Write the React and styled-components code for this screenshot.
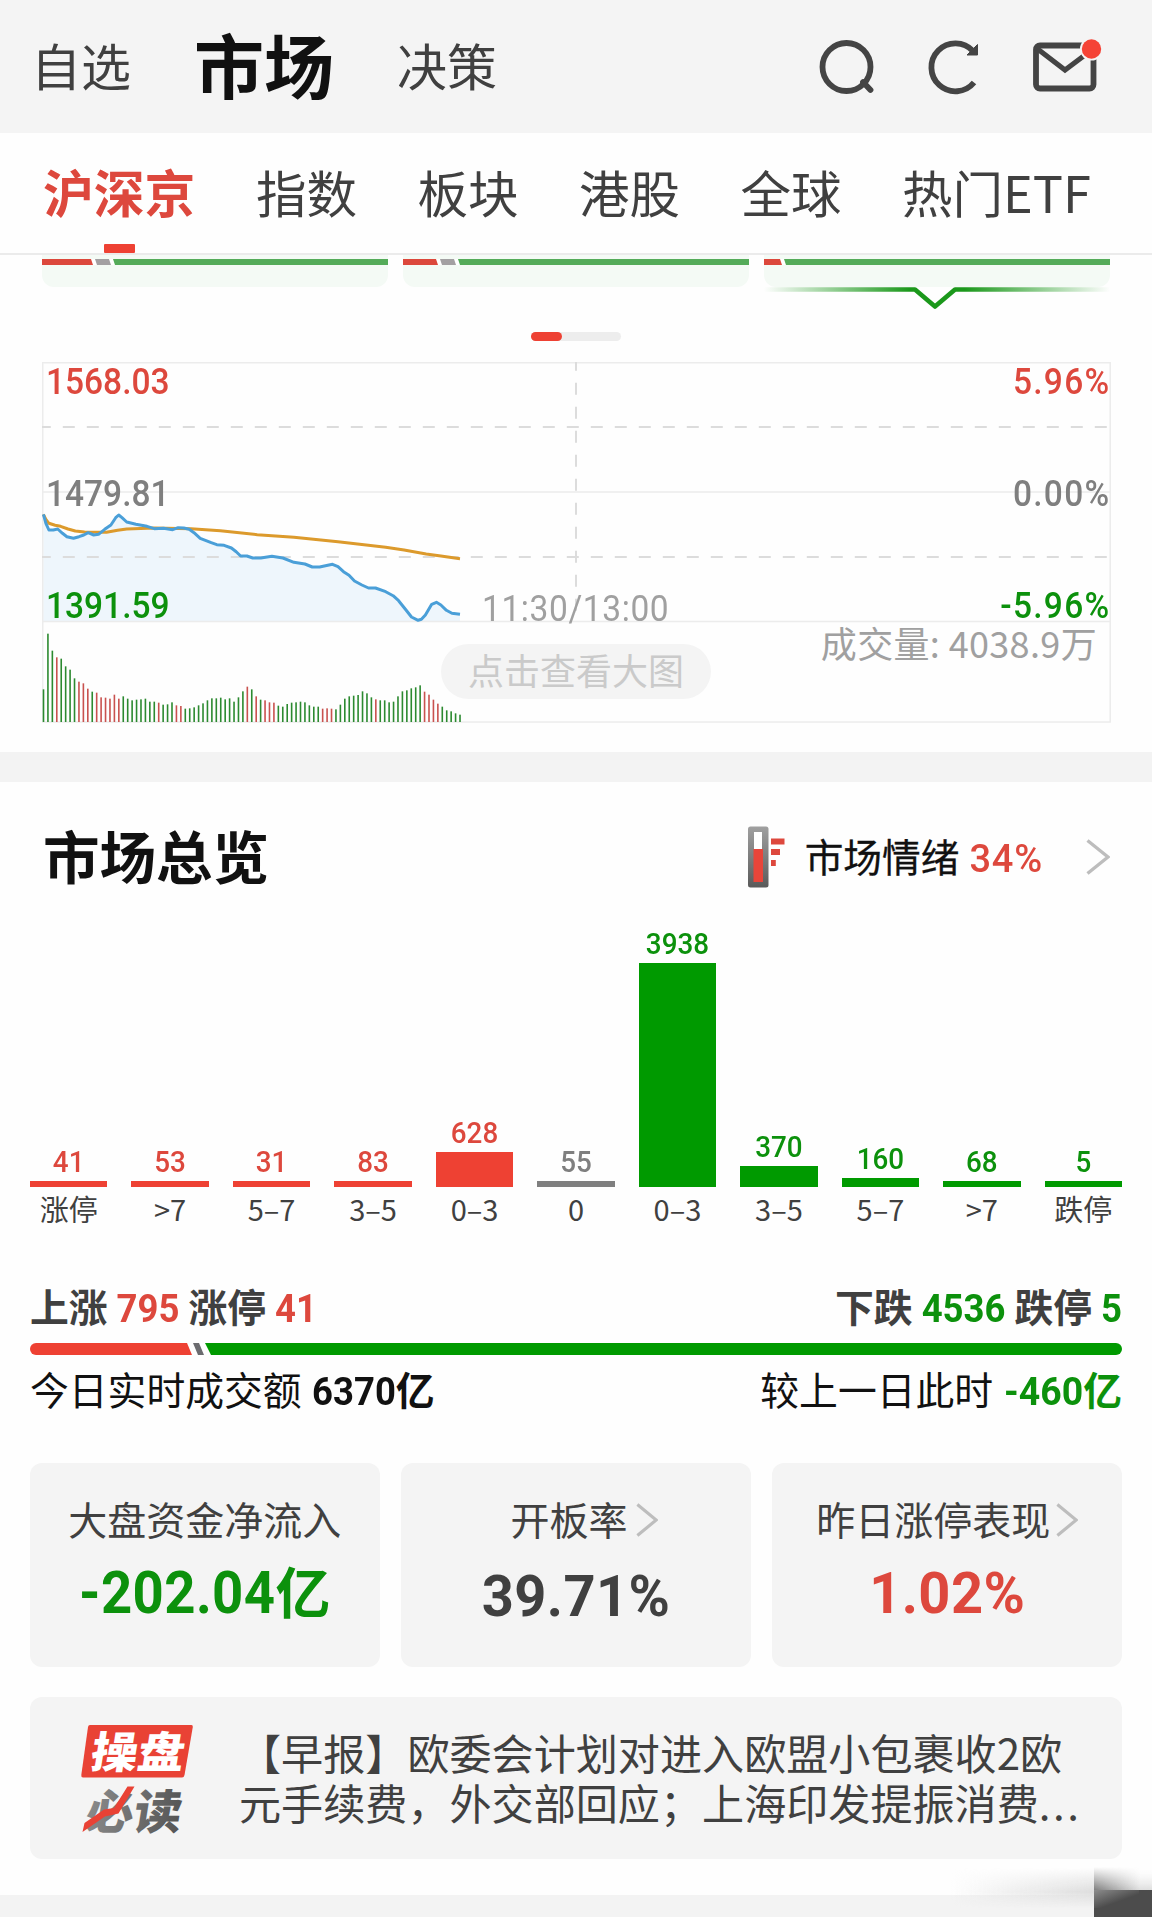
import React from "react";
import styled, { createGlobalStyle, css } from "styled-components";

const colors = {
  red: "#ee4133",
  redText: "#dd483d",
  green: "#009a00",
  greenText: "#0c910c",
  gray: "#7f7f7f",
  dark: "#111111",
  text: "#404040",
  panel: "#f4f4f4",
};

const GlobalStyle = createGlobalStyle`
  * {
    box-sizing: border-box;
  }
  body {
    margin: 0;
    background: #fefefe;
    font-family: "Noto Sans CJK SC", "Noto Sans", sans-serif;
    color: ${colors.text};
    -webkit-font-smoothing: antialiased;
  }
`;

const toneColor = {
  up: colors.redText,
  down: colors.greenText,
  flat: colors.gray,
  muted: "#a0a0a0",
  text: colors.text,
  dark: colors.dark,
};

const barColor = { up: colors.red, down: colors.green, flat: colors.gray };

/* digits are set a little taller than Roboto draws them, from the baseline */
const numeric = css`
  display: inline-block;
  font-family: Roboto, "Liberation Sans", sans-serif;
  line-height: 1;
  transform: scaleY(${(props) => props.$stretch || 1.07});
  transform-origin: 50% 84%;
`;

const Num = styled.span`
  ${numeric}
  font-size: ${(props) => props.$size}px;
  font-weight: ${(props) => props.$weight || 700};
  color: ${(props) => toneColor[props.$tone]};
`;

const Page = styled.div`
  position: relative;
  width: 1152px;
  height: 1917px;
  overflow: hidden;
  display: flex;
  flex-direction: column;
  background: #fefefe;
`;

/* ---------- header ---------- */

const Header = styled.header`
  height: 133px;
  flex: none;
  display: flex;
  align-items: center;
  padding: 0 49px 0 31px;
  background: ${colors.panel};
`;

const HeaderNav = styled.nav`
  display: flex;
  align-items: center;
  flex: 1;
`;

const HeaderItem = styled.a`
  font-size: ${(props) => (props.$active ? 70 : 50)}px;
  font-weight: ${(props) => (props.$active ? 700 : 400)};
  color: ${(props) => (props.$active ? colors.dark : colors.text)};
  line-height: 1;
  margin-right: 63px;
  padding-bottom: ${(props) => (props.$active ? 5 : 6)}px;
`;

const HeaderIcons = styled.div`
  display: flex;
  align-items: center;
  gap: 51px;
`;

/* ---------- tabs ---------- */

const Tabs = styled.nav`
  height: 122px;
  flex: none;
  display: flex;
  gap: 60.5px;
  padding-left: 43px;
  border-bottom: 2px solid #ebebeb;
`;

const Tab = styled.a`
  display: flex;
  flex-direction: column;
  align-items: center;
  justify-content: space-between;
  padding-top: 33px;
  font-size: ${(props) => (props.$active ? 50.8 : 50.5)}px;
  line-height: 1;
  font-weight: ${(props) => (props.$active ? 700 : 400)};
  color: ${(props) => (props.$active ? colors.redText : colors.text)};
  white-space: nowrap;
`;

const TabMark = styled.span`
  width: 31px;
  height: 9px;
  border-radius: 1px;
  background: ${colors.red};
`;

/* ---------- index strip ---------- */

const IndexStrip = styled.div`
  display: grid;
  grid-template-columns: repeat(3, 346px);
  gap: 15px;
  padding-left: 42px;
  height: 77px;
  flex: none;
`;

const IndexCard = styled.div`
  position: relative;
  height: 32px;
  padding-top: 4px;
  background: #f4faf5;
  border-radius: 0 0 12px 12px;
`;

const MiniRatio = styled.div`
  display: flex;
  height: 6px;
  background: #fff;
`;

const MiniPart = styled.span`
  height: 6px;
  margin-right: 2px;
  width: ${(props) => (props.$width ? `${props.$width}px` : "auto")};
  flex: ${(props) => (props.$width ? "none" : 1)};
  background: ${(props) => props.$color};
  clip-path: ${(props) =>
    props.$first
      ? "polygon(0 0, calc(100% - 2px) 0, 100% 100%, 0 100%)"
      : props.$last
        ? "polygon(0 0, 100% 0, 100% 100%, 2px 100%)"
        : "polygon(0 0, calc(100% - 2px) 0, 100% 100%, 2px 100%)"};
  &:last-child {
    margin-right: 0;
  }
`;

const SelectedMark = styled.svg`
  position: absolute;
  left: 0;
  top: 30px;
  width: 346px;
  height: 28px;
`;

const Pager = styled.div`
  width: 90px;
  height: 9px;
  margin: 0 auto;
  flex: none;
  border-radius: 5px;
  background: #ededed;
  &::before {
    content: "";
    display: block;
    width: 31px;
    height: 9px;
    border-radius: 5px;
    background: ${colors.red};
  }
`;

/* ---------- intraday chart ---------- */

const ChartBox = styled.div`
  position: relative;
  width: 1069px;
  height: 361px;
  margin: 21px 0 29px 42px;
  flex: none;
  svg {
    display: block;
  }
`;

const AxisLabel = styled.span`
  ${numeric}
  position: absolute;
  top: ${(props) => props.$top}px;
  ${(props) =>
    props.$right ? "right: 0.5px; letter-spacing: 1.3px;" : "left: 4px;"}
  font-size: 33.5px;
  font-weight: 500;
  color: ${(props) => toneColor[props.$tone]};
`;

const NoonLabel = styled(AxisLabel)`
  left: 440px;
  font-weight: 400;
  letter-spacing: 0.6px;
`;

const VolumeLabel = styled.span`
  position: absolute;
  top: 262px;
  right: 14px;
  font-size: 36px;
  line-height: 1;
  letter-spacing: 0.35px;
  color: #a0a0a0;
  white-space: pre;
`;

const ZoomButton = styled.button`
  position: absolute;
  left: 399px;
  top: 282px;
  width: 270px;
  height: 55px;
  padding: 0 0 6px;
  border: 0;
  border-radius: 28px;
  background: ${colors.panel};
  color: #cacaca;
  font-family: inherit;
  font-size: 36px;
  line-height: 1;
`;

const Divider = styled.div`
  height: 30px;
  flex: none;
  background: #f3f3f3;
`;

/* ---------- overview ---------- */

const Overview = styled.section`
  flex: 1;
  padding: 0 30px;
  display: flex;
  flex-direction: column;
`;

const OverviewHead = styled.div`
  display: flex;
  align-items: center;
  height: 62px;
  margin-top: 44px;
  padding: 0 12px 0 13px;
`;

const Title = styled.h2`
  flex: 1;
  margin: 0;
  padding-bottom: 6px;
  font-size: 56.5px;
  line-height: 1;
  font-weight: 700;
  color: ${colors.dark};
`;

const Mood = styled.div`
  display: flex;
  align-items: center;
`;

const MoodText = styled.span`
  margin-left: 20px;
  font-size: 38.7px;
  line-height: 1;
  font-weight: 400;
  -webkit-text-stroke: 0.3px currentColor;
  color: ${colors.dark};
  white-space: nowrap;
  ${Num} {
    margin-left: 10px;
    margin-right: 43px;
    letter-spacing: 0.8px;
    -webkit-text-stroke: 0;
  }
`;

const Distribution = styled.div`
  display: grid;
  grid-template-columns: repeat(11, 1fr);
  column-gap: 24.2px;
  height: 339px;
`;

const Column = styled.div`
  display: flex;
  flex-direction: column;
  align-items: center;
  justify-content: flex-end;
`;

const ColumnBar = styled.div`
  width: 100%;
  margin-top: 4px;
  background: ${(props) => barColor[props.$tone]};
`;

const ColumnLabel = styled.span`
  height: 40px;
  padding-top: 7px;
  font-size: 29px;
  line-height: 1;
  white-space: nowrap;
`;

const StatRow = styled.div`
  display: flex;
  justify-content: space-between;
  font-size: 38.8px;
  line-height: 1;
  font-weight: ${(props) => (props.$bold ? 700 : 400)};
  color: ${(props) => (props.$bold ? colors.text : colors.dark)};
  height: 40px;
  margin-top: ${(props) => (props.$bold ? 59 : 14)}px;
`;

const StatGroup = styled.div`
  display: flex;
  align-items: baseline;
  gap: ${(props) => props.$gap || 9}px;
  white-space: nowrap;
`;

const Amount = styled.span`
  font-weight: 700;
  color: ${(props) => toneColor[props.$tone]};
`;

const Ratio = styled.div`
  display: flex;
  height: 12px;
  margin-top: 17px;
  border-radius: 6px;
  overflow: hidden;
`;

const RatioPart = styled.span`
  flex: ${(props) => (props.$width ? `0 0 ${props.$width}px` : 1)};
  background: ${(props) => props.$color};
  clip-path: ${(props) => props.$clip};
`;

const Cards = styled.div`
  display: grid;
  grid-template-columns: repeat(3, 1fr);
  column-gap: 21.7px;
  margin-top: 54px;
`;

const Card = styled.div`
  height: 204px;
  display: flex;
  flex-direction: column;
  align-items: center;
  background: ${colors.panel};
  border-radius: 12px;
`;

const CardLabel = styled.div`
  display: flex;
  align-items: center;
  gap: ${(props) => props.$gap || 0}px;
  padding-left: ${(props) => props.$shift || 0}px;
  margin-top: 36px;
  height: 41px;
  font-size: 39px;
  line-height: 1;
  span {
    padding-bottom: 3px;
  }
`;

const CardValue = styled.div`
  margin-top: ${(props) => (props.$low ? 25 : 22)}px;
  font-size: 55px;
  line-height: 1;
  font-weight: 700;
  color: ${(props) => toneColor[props.$tone]};
  white-space: nowrap;
  ${Num} {
    letter-spacing: 0.4px;
  }
`;

const News = styled.div`
  display: flex;
  align-items: center;
  height: 162px;
  margin-top: 30px;
  padding-left: 48px;
  border-radius: 12px;
  background: ${colors.panel};
  svg {
    overflow: visible;
  }
`;

const NewsText = styled.p`
  margin: 0 0 3px 43px;
  font-size: 42.1px;
  line-height: 49.8px;
  white-space: nowrap;
`;

const Ellipsis = styled.span`
  letter-spacing: 2.5px;
`;

const Footer = styled.div`
  height: 22px;
  flex: none;
  background: #f3f3f3;
`;

/* floating handle peeking in from the corner */
const CornerShade = styled.div`
  position: absolute;
  right: 58px;
  bottom: 9px;
  width: 143px;
  height: 40px;
  background: linear-gradient(to right, #eeeeee00, #dddddd);
  mask-image: linear-gradient(to bottom, transparent, #000 60%, transparent);
`;

const CornerBlock = styled.div`
  position: absolute;
  right: 0;
  bottom: 0;
  width: 58px;
  height: 50px;
  background:
    linear-gradient(160deg, #8c8c8c 0%, #6a6a6a00 60%) 0 23px / 45px 18px no-repeat,
    linear-gradient(#4c4c4c, #4c4c4c) 0 23px / 58px 27px no-repeat,
    linear-gradient(to right, #7f7f7f, #d8d8d800) 0 0 / 46px 23px no-repeat,
    linear-gradient(to bottom, #fefefe00, #dddddd) 0 0 / 58px 23px no-repeat;
  mask-image: linear-gradient(to bottom, transparent, #000 23px);
`;

const tabs = ["沪深京", "指数", "板块", "港股", "全球", "热门ETF"];

const distribution = [
  { value: 41, label: "涨停", height: 6, tone: "up" },
  { value: 53, label: ">7", height: 6, tone: "up" },
  { value: 31, label: "5–7", height: 6, tone: "up" },
  { value: 83, label: "3–5", height: 6, tone: "up" },
  { value: 628, label: "0–3", height: 35, tone: "up" },
  { value: 55, label: "0", height: 6, tone: "flat" },
  { value: 3938, label: "0–3", height: 224, tone: "down" },
  { value: 370, label: "3–5", height: 21, tone: "down" },
  { value: 160, label: "5–7", height: 9, tone: "down" },
  { value: 68, label: ">7", height: 6, tone: "down" },
  { value: 5, label: "跌停", height: 6, tone: "down" },
];

const price = [
  [118, 103], [125, 130], [133, 150], [145, 150], [157, 147], [170, 160],
  [182, 170], [200, 175], [215, 170], [228, 165], [240, 158], [255, 165],
  [268, 163], [285, 148], [302, 135], [315, 113], [323, 105], [332, 113],
  [345, 126], [370, 133], [400, 139], [420, 146], [445, 145], [470, 149],
  [485, 143], [500, 144], [515, 148], [528, 158], [545, 175], [575, 188],
  [590, 194], [610, 196], [630, 204], [643, 215], [655, 228], [672, 228],
  [688, 234], [710, 234], [740, 229], [770, 234], [800, 247], [830, 252],
  [850, 261], [870, 261], [905, 253], [920, 260], [935, 275], [950, 286],
  [965, 303], [985, 315], [1003, 324], [1022, 324], [1050, 335], [1070, 347],
  [1085, 362], [1105, 390], [1120, 411], [1138, 421], [1147, 418],
  [1158, 405], [1175, 373], [1188, 367], [1200, 375], [1215, 391],
  [1230, 400], [1252, 403],
];

const average = [
  [118, 103], [125, 118], [133, 130], [150, 136], [165, 139], [185, 147],
  [205, 153], [230, 156], [290, 157], [320, 151], [345, 147], [420, 144],
  [520, 146], [600, 152], [700, 164], [800, 172], [920, 185], [1050, 202],
  [1100, 210], [1160, 222], [1200, 228], [1252, 236],
];

// one entry per minute bar: direction and height
const volume =
  "g98 g265 g214 r194 g190 g167 g157 g131 r121 r116 r100 g91 r88 r74 r73 r70 r82 r70 g77 g70 g65 g67 g68 g70 g61 g61 r58 g52 g53 g59 r50 r48 g40 g41 g44 g50 g56 g65 g71 g71 g73 g68 g71 g61 g74 g92 r106 g98 r77 g67 r65 r59 r58 g49 g46 g54 g58 g59 g61 g59 g50 g46 g46 r40 r41 r40 g38 g52 g70 g77 g79 g81 g92 g86 g74 r68 g65 g65 g59 g61 g77 g92 g95 g101 g104 g110 r91 r82 r67 r55 g46 g35 g32 g26 g22"
    .split(" ")
    .map((item) => ({ up: item[0] === "r", height: Number(item.slice(1)) / 3 }));

const toPath = (points) =>
  points
    .map(([x, y], i) => `${i ? "L" : "M"}${(x / 2.722 - 42).toFixed(1)} ${(y / 3 + 118).toFixed(1)}`)
    .join("");

const SearchIcon = () => (
  <svg width="58" height="58" viewBox="0 0 58 58" fill="none" stroke="#444" strokeWidth="5.8">
    <circle cx="27.5" cy="29" r="24" />
    <path d="M44 44l7.5 8" strokeLinecap="round" />
  </svg>
);

const RefreshIcon = () => (
  <svg width="54" height="58" viewBox="0 0 54 58" fill="none">
    <path d="M45 13A24 24 0 1 0 46 44.5" stroke="#444" strokeWidth="5.8" />
    <path d="M49.5 6.5V17H39z" fill="#444" stroke="#444" strokeWidth="1" />
  </svg>
);

const MailIcon = () => (
  <svg width="70" height="58" viewBox="0 0 70 58" fill="none">
    <rect x="3" y="7.5" width="57.5" height="43" rx="4" stroke="#444" strokeWidth="5.8" />
    <path d="M4 10.5l28 21.5 24-18" stroke="#444" strokeWidth="5.2" />
    <circle cx="58.5" cy="11" r="11.5" fill={colors.panel} />
    <circle cx="58.5" cy="11" r="9.7" fill="#f54336" />
  </svg>
);

const ChevronIcon = ({ width, height }) => (
  <svg width={width} height={height} viewBox="0 0 24 36" preserveAspectRatio="none" fill="none">
    <path d="M1.5 1.5L22 18L1.5 34.5" stroke="#bdbdbd" strokeWidth="3.4" />
  </svg>
);

const ThermometerIcon = () => (
  <svg width="37" height="62" viewBox="0 0 37 62">
    <defs>
      <linearGradient id="tube" x1="0" y1="0" x2="0" y2="1">
        <stop offset="0" stopColor="#a0a0a0" />
        <stop offset="1" stopColor="#5a5a5a" />
      </linearGradient>
    </defs>
    <rect x="0" y="0.5" width="20.5" height="61" rx="2.5" fill="url(#tube)" />
    <rect x="6" y="6" width="8" height="20" fill="#fff" />
    <rect x="5.5" y="23" width="9.5" height="33" fill="#e8453a" />
    <path d="M23 12.5h13.5v6H23zM23 23h9v6h-9zM23 34h4.8v6H23z" fill="#dd483d" />
  </svg>
);

const NewsLogo = () => (
  <svg width="118" height="112" viewBox="0 0 118 112">
    <defs>
      <linearGradient id="ink" x1="0" y1="0" x2="1" y2="0">
        <stop offset="0" stopColor="#8a8a8a" />
        <stop offset="1" stopColor="#555" />
      </linearGradient>
    </defs>
    <path d="M12 3H113.5Q115 3 114.8 5L106.5 53Q106 55.5 104 55.5H5Q3 55.5 3.3 53L10 5Q10.3 3 12 3z" fill="#e94235" />
    <g fontFamily="Noto Sans CJK SC, sans-serif" fontWeight="900" fontSize="45">
      <text x="0" y="0" fill="#fff" transform="translate(11 45.5) skewX(-9) scale(1.04 0.96)">
        操盘
      </text>
      <text x="0" y="0" fill="url(#ink)" transform="translate(6 107) skewX(-9) scale(1.06 1.04)">
        必读
      </text>
    </g>
    <path d="M4.5 110L6.5 101L26 87.5L36 86L49.5 64.5H56.5L40.5 91.5L27 94.5z" fill="#e94235" />
  </svg>
);

const IntradayChart = () => {
  const pricePath = toPath(price);
  return (
    <ChartBox>
      <svg width="1069" height="361" fill="none">
        <path d={`${pricePath}V259H1.3z`} fill="#eef6fc" />
        <g stroke="#ececec" strokeWidth="1.5">
          <rect x="0.7" y="0.7" width="1067.5" height="359.3" />
          <path d="M0 130H1068M0 259.5H1068" />
        </g>
        <g stroke="#dcdcdc" strokeWidth="2" strokeDasharray="12 12">
          <path d="M0 65H1068M0 195H1068" strokeDashoffset="3.2" />
          <path d="M534 0V259" strokeDashoffset="3.3" />
        </g>
        <path d={toPath(average)} stroke="#dc9a2c" strokeWidth="3" strokeLinejoin="round" />
        <path d={pricePath} stroke="#4a9fd8" strokeWidth="3" strokeLinejoin="round" />
        {volume.map((bar, i) => (
          <rect
            key={i}
            x={0.7 + i * 4.431}
            y={360 - bar.height}
            width="1.6"
            height={bar.height}
            fill={bar.up ? "#c9524f" : "#2c8a30"}
          />
        ))}
      </svg>
      <AxisLabel $stretch={1.1} $top={4} $tone="up">1568.03</AxisLabel>
      <AxisLabel $stretch={1.1} $top={116} $tone="flat">1479.81</AxisLabel>
      <AxisLabel $stretch={1.1} $top={228} $tone="down">1391.59</AxisLabel>
      <AxisLabel $stretch={1.1} $top={4} $tone="up" $right>5.96%</AxisLabel>
      <AxisLabel $stretch={1.1} $top={116} $tone="flat" $right>0.00%</AxisLabel>
      <AxisLabel $stretch={1.1} $top={228} $tone="down" $right>-5.96%</AxisLabel>
      <NoonLabel $stretch={1.1} $top={231} $tone="muted">11:30/13:00</NoonLabel>
      <VolumeLabel>成交量: 4038.9万</VolumeLabel>
      <ZoomButton>点击查看大图</ZoomButton>
    </ChartBox>
  );
};

const App = () => {
  return (
    <Page>
      <GlobalStyle />
      <Header>
        <HeaderNav>
          <HeaderItem>自选</HeaderItem>
          <HeaderItem $active>市场</HeaderItem>
          <HeaderItem>决策</HeaderItem>
        </HeaderNav>
        <HeaderIcons>
          <SearchIcon />
          <RefreshIcon />
          <MailIcon />
        </HeaderIcons>
      </Header>

      <Tabs>
        {tabs.map((tab, i) => (
          <Tab key={tab} $active={i === 0}>
            {tab}
            {i === 0 && <TabMark />}
          </Tab>
        ))}
      </Tabs>

      <IndexStrip>
        <IndexCard>
          <MiniRatio>
            <MiniPart $first $width={51} $color="#dc483c" />
            <MiniPart $width={16} $color="#a3a0a2" />
            <MiniPart $last $color="#54ab59" />
          </MiniRatio>
        </IndexCard>
        <IndexCard>
          <MiniRatio>
            <MiniPart $first $width={35} $color="#dc483c" />
            <MiniPart $width={16} $color="#a3a0a2" />
            <MiniPart $last $color="#54ab59" />
          </MiniRatio>
        </IndexCard>
        <IndexCard>
          <MiniRatio>
            <MiniPart $first $width={18} $color="#dc483c" />
            <MiniPart $last $color="#54ab59" />
          </MiniRatio>
          <SelectedMark viewBox="0 0 346 28" fill="none">
            <defs>
              <linearGradient id="fade" gradientUnits="userSpaceOnUse" x1="0" y1="0" x2="346" y2="0">
                <stop offset="0" stopColor="#1b981b" stopOpacity="0" />
                <stop offset="0.42" stopColor="#1b981b" />
                <stop offset="0.58" stopColor="#1b981b" />
                <stop offset="1" stopColor="#1b981b" stopOpacity="0" />
              </linearGradient>
            </defs>
            <path d="M0 4.5H151L171 21.5L191 4.5H346" stroke="url(#fade)" strokeWidth="4.6" strokeLinejoin="round" />
          </SelectedMark>
        </IndexCard>
      </IndexStrip>
      <Pager />

      <IntradayChart />

      <Divider />

      <Overview>
        <OverviewHead>
          <Title>市场总览</Title>
          <Mood>
            <ThermometerIcon />
            <MoodText>
              市场情绪
              <Num $size={38} $weight={500} $stretch={1.03} $tone="up">34%</Num>
            </MoodText>
            <ChevronIcon width={24} height={36} />
          </Mood>
        </OverviewHead>

        <Distribution>
          {distribution.map((item, i) => (
            <Column key={i}>
              <Num $size={27.8} $weight={500} $stretch={1.05} $tone={item.tone}>
                {item.value}
              </Num>
              <ColumnBar $tone={item.tone} style={{ height: item.height }} />
              <ColumnLabel>{item.label}</ColumnLabel>
            </Column>
          ))}
        </Distribution>

        <StatRow $bold>
          <StatGroup>
            上涨<Num $size={36.5} $tone="up">795</Num>
            涨停<Num $size={36.5} $tone="up">41</Num>
          </StatGroup>
          <StatGroup>
            下跌<Num $size={36.5} $tone="down">4536</Num>
            跌停<Num $size={36.5} $tone="down">5</Num>
          </StatGroup>
        </StatRow>
        <Ratio>
          <RatioPart $width={162} $color={colors.red} $clip="polygon(0 0, 157px 0, 100% 100%, 0 100%)" />
          <RatioPart $width={13} $color="#6b6b6f" $clip="polygon(1px 0, 7px 0, 12px 100%, 6px 100%)" />
          <RatioPart $color={colors.green} $clip="polygon(0 0, 100% 0, 100% 100%, 6px 100%)" />
        </Ratio>
        <StatRow>
          <StatGroup $gap={10.5}>
            今日实时成交额
            <Amount $tone="dark">
              <Num $size={36.5} $tone="dark">6370</Num>亿
            </Amount>
          </StatGroup>
          <StatGroup $gap={11}>
            较上一日此时
            <Amount $tone="down">
              <Num $size={37.4} $stretch={1.05} $tone="down">-460</Num>亿
            </Amount>
          </StatGroup>
        </StatRow>

        <Cards>
          <Card>
            <CardLabel>
              <span>大盘资金净流入</span>
            </CardLabel>
            <CardValue $tone="down">
              <Num $size={54.5} $tone="down">-202.04</Num>亿
            </CardValue>
          </Card>
          <Card>
            <CardLabel $gap={8} $shift={16}>
              <span>开板率</span>
              <ChevronIcon width={22} height={34} />
            </CardLabel>
            <CardValue $tone="text" $low>
              <Num $size={56} $stretch={1.04} $tone="text">39.71%</Num>
            </CardValue>
          </Card>
          <Card>
            <CardLabel $gap={6}>
              <span>昨日涨停表现</span>
              <ChevronIcon width={22} height={34} />
            </CardLabel>
            <CardValue $tone="up">
              <Num $size={56} $stretch={1.04} $tone="up">1.02%</Num>
            </CardValue>
          </Card>
        </Cards>

        <News>
          <NewsLogo />
          <NewsText>
            【早报】欧委会计划对进入欧盟小包裹收2欧
            <br />
            元手续费，外交部回应；上海印发提振消费<Ellipsis>...</Ellipsis>
          </NewsText>
        </News>
      </Overview>
      <Footer />
      <CornerShade />
      <CornerBlock />
    </Page>
  );
};

export default App;
